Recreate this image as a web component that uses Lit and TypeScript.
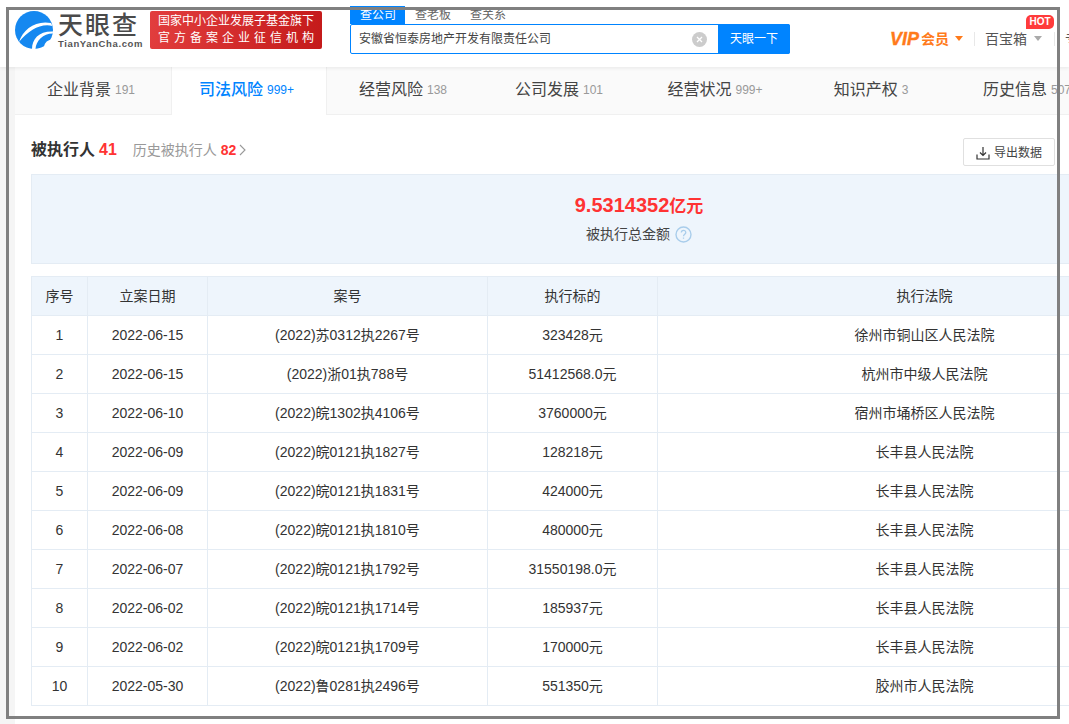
import { LitElement, html, css } from "lit";
import { customElement } from "lit/decorators.js";

const tabs = [
  ["企业背景", "191"], ["司法风险", "999+"], ["经营风险", "138"], ["公司发展", "101"],
  ["经营状况", "999+"], ["知识产权", "3"], ["历史信息", "507"],
];
const rows = [
  ["1", "2022-06-15", "(2022)苏0312执2267号", "323428元", "徐州市铜山区人民法院"],
  ["2", "2022-06-15", "(2022)浙01执788号", "51412568.0元", "杭州市中级人民法院"],
  ["3", "2022-06-10", "(2022)皖1302执4106号", "3760000元", "宿州市埇桥区人民法院"],
  ["4", "2022-06-09", "(2022)皖0121执1827号", "128218元", "长丰县人民法院"],
  ["5", "2022-06-09", "(2022)皖0121执1831号", "424000元", "长丰县人民法院"],
  ["6", "2022-06-08", "(2022)皖0121执1810号", "480000元", "长丰县人民法院"],
  ["7", "2022-06-07", "(2022)皖0121执1792号", "31550198.0元", "长丰县人民法院"],
  ["8", "2022-06-02", "(2022)皖0121执1714号", "185937元", "长丰县人民法院"],
  ["9", "2022-06-02", "(2022)皖0121执1709号", "170000元", "长丰县人民法院"],
  ["10", "2022-05-30", "(2022)鲁0281执2496号", "551350元", "胶州市人民法院"],
];

@customElement("app-root")
export class AppRoot extends LitElement {
  static styles = css`
    :host { display: block; width: 1069px; height: 724px; overflow: hidden; position: relative; background: #f5f5f5;
      font-family: "Liberation Sans", "Noto Sans CJK SC", sans-serif; color: #333; font-size: 14px; line-height: 20px; }
    * { box-sizing: border-box; }
    .frame { position: absolute; left: 6px; top: 7px; width: 1054px; height: 712px; border: 3px solid #808080; pointer-events: none; z-index: 5; }
    .head { height: 67px; background: #fff; display: flex; align-items: flex-start; box-shadow: 0 1px 4px rgba(0,0,0,.08); position: relative; z-index: 2; white-space: nowrap; width: 1069px; }
    .logo { width: 135px; height: 67px; display: flex; padding: 11px 0 0 15px; flex: none; }
    .logo svg { flex: none; width: 38px; height: 38px; }
    .wordmark { margin-left: 5px; width: 82px; display: flex; flex-direction: column; }
    .wm-cn { font-size: 25px; line-height: 27px; letter-spacing: 2px; color: #4a4a4a; font-weight: 500; margin-top: 1px; }
    .wm-en { font-size: 9.5px; line-height: 12px; letter-spacing: .62px; color: #555; font-weight: 700; margin-top: -1px; }
    .banner { margin: 11px 0 0 15px; width: 172px; height: 38px; border-radius: 2px; flex: none;
      background: linear-gradient(100deg, #e23e3e, #c41a1a); color: #fff; text-align: center; font-size: 12px; line-height: 17px; padding-top: 2px; }
    .banner div:last-child { letter-spacing: 4px; padding-left: 4px; }
    .search { margin: 6px 0 0 28px; width: 440px; flex: none; }
    .stabs { display: flex; height: 18px; font-size: 12px; line-height: 18px; color: #666; }
    .stab { padding: 0 10px; width: 55px; text-align: center; }
    .stab.on { background: #0084ff; color: #fff; }
    .sbox { height: 30px; border: 1px solid #0084ff; border-radius: 2px; display: flex; align-items: center; font-size: 12px; background: #fff; }
    .sval { flex: 1; padding-left: 8px; color: #444; }
    .clear { width: 15px; height: 15px; margin-right: 11px; flex: none; display: block; }
    .sbtn { width: 72px; height: 30px; margin: -1px -1px -1px 0; background: #0084ff; color: #fff; text-align: center; line-height: 30px; border-radius: 0 2px 2px 0; }
    .right { display: flex; align-items: center; margin: 26px 0 0 100px; height: 25px; position: relative; font-size: 14px; color: #555; }
    .vip { color: #ff7a1a; font-weight: 700; font-size: 14px; display: flex; align-items: center; width: 84px; }
    .vip i { font-size: 18px; font-style: italic; font-weight: 700; margin-right: 2px; -webkit-text-stroke: .4px #ff7a1a; }
    .tri { width: 0; height: 0; border-left: 4.5px solid transparent; border-right: 4.5px solid transparent; border-top: 5px solid #ff7a1a; margin-left: 6px; }
    .tri.gray { border-top-color: #aaa; margin-left: 7px; }
    .sep { width: 1px; height: 14px; background: #e8e8e8; flex: none; }
    .box { margin-left: 10px; display: flex; align-items: center; width: 69px; }
    .hot { position: absolute; left: 136px; top: -11px; width: 28px; height: 14px; background: #ff3b3b; color: #fff; font-size: 10px; line-height: 14px; text-align: center; border-radius: 5px 5px 5px 0; font-weight: 700; }
    .more { margin-left: 10px; }
    .page { margin-left: 15px; width: 1054px; background: #fff; height: 657px; overflow: hidden; }
    .tabs { display: flex; height: 48px; background: #fafafa; border-bottom: 1px solid #f0f0f0; white-space: nowrap; }
    .tab { flex: none; width: 156px; height: 47px; display: flex; align-items: center; justify-content: center; font-size: 16px; color: #444; padding: 0 4px 2px 0; }
    .tab.on { background: #fff; color: #0084ff; border-left: 1px solid #f0f0f0; border-right: 1px solid #f0f0f0; height: 48px; font-weight: 500; padding: 0 5px 3px 0; }
    .tab span { font-size: 12px; color: #999; margin-left: 4px; font-weight: 400; }
    .tab.on span { color: #0084ff; }
    .tab:last-child { justify-content: flex-start; padding-left: 32px; }
    .body { padding: 22px 0 0 16px; }
    .title { display: flex; align-items: center; height: 28px; white-space: nowrap; }
    .lead { display: flex; align-items: center; margin-bottom: 2px; }
    .lead b { font-size: 16px; color: #333; font-weight: 700; }
    .red { color: #ff3333; font-weight: 700; }
    .num { font-size: 16px; margin-left: 4px; }
    .hist { color: #999; margin-left: 16px; }
    .num2 { font-size: 14px; margin-left: 4px; }
    .chev { margin-left: 3px; width: 7px; height: 12px; display: block; }
    .export { margin: 2px 14px 0 auto; width: 92px; height: 28px; border: 1px solid #e0e0e0; border-radius: 2px; display: flex; align-items: center; justify-content: center; font-size: 12px; color: #444; background: #fff; padding-top: 1px; }
    .export svg { width: 14px; height: 14px; margin-right: 4px; display: block; }
    .summary { margin-top: 9px; width: 1216px; height: 90px; background: #eef5fc; border: 1px solid #e4ecf4; display: flex; flex-direction: column; align-items: center; }
    .amount { margin-top: 17px; height: 26px; line-height: 26px; font-size: 20px; color: #ff3333; font-weight: 700; }
    .amount small { font-size: 17px; font-weight: 700; }
    .label { display: flex; align-items: center; margin-top: 6px; height: 20px; color: #444; }
    .label svg { width: 17px; height: 17px; margin-left: 5px; display: block; }
    table { margin-top: 12px; border-collapse: collapse; table-layout: fixed; width: 1160px; }
    th, td { border: 1px solid #e4ecf4; height: 39px; padding: 0; text-align: center; font-weight: 400; color: #333; white-space: nowrap; }
    th { background: #eef5fc; }
  `;

  render() {
    return html`
      <div class="frame"></div>
      <header class="head">
        <div class="logo">
          <svg viewBox="0 0 38 38">
            <circle cx="19" cy="19" r="19" fill="#1588f0"/>
            <path d="M4 31C8 18 21 9 36 12L37.500 15C26 12 14 19 4 31Z" fill="#fff"/>
            <path d="M17 38C17 28 24 20 38 20.500L37.800 22.500C28 22.500 21 30 20.500 38Z" fill="#fff"/>
            <path d="M29 37C29 33 31 29.500 36.500 28.500L34 33Z" fill="#fff"/>
          </svg>
          <div class="wordmark">
            <div class="wm-cn">天眼查</div>
            <div class="wm-en">TianYanCha.com</div>
          </div>
        </div>
        <div class="banner"><div>国家中小企业发展子基金旗下</div><div>官方备案企业征信机构</div></div>
        <div class="search">
          <div class="stabs"><div class="stab on">查公司</div><div class="stab">查老板</div><div class="stab">查关系</div></div>
          <div class="sbox">
            <div class="sval">安徽省恒泰房地产开发有限责任公司</div>
            <svg class="clear" viewBox="0 0 15 15"><circle cx="7.5" cy="7.5" r="7.5" fill="#ccc"/><path d="M5 5l5 5M10 5l-5 5" stroke="#fff" stroke-width="1.3"/></svg>
            <div class="sbtn">天眼一下</div>
          </div>
        </div>
        <div class="right">
          <div class="vip"><i>VIP</i>会员<span class="tri"></span></div>
          <div class="sep"></div>
          <div class="box">百宝箱<span class="tri gray"></span></div>
          <div class="sep"></div>
          <div class="more">专业版</div>
          <div class="hot">HOT</div>
        </div>
      </header>
      <main class="page">
        <nav class="tabs">
          ${tabs.map(([n, c], i) => html`<div class="tab ${i === 1 ? "on" : ""}">${n}<span>${c}</span></div>`)}
        </nav>
        <section class="body">
          <div class="title">
            <div class="lead">
              <b>被执行人</b><span class="red num">41</span>
              <span class="hist">历史被执行人</span><span class="red num2">82</span>
              <svg class="chev" viewBox="0 0 7 12"><path d="M1 1l5 5-5 5" fill="none" stroke="#999" stroke-width="1.1"/></svg>
            </div>
            <div class="export">
              <svg viewBox="0 0 14 14"><path d="M7 1v8M4 6.5L7 9.5l3-3M1 8.5v4.5h12V8.5" fill="none" stroke="#333" stroke-width="1.2"/></svg>
              导出数据
            </div>
          </div>
          <div class="summary">
            <div class="amount">9.5314352<small>亿元</small></div>
            <div class="label">被执行总金额
              <svg viewBox="0 0 17 17"><circle cx="8.5" cy="8.5" r="7.5" fill="none" stroke="#a9cdeb" stroke-width="1.4"/><path d="M6.3 6.6c0-3 4.5-3 4.5-.1 0 1.800-2.300 1.800-2.300 3.800M8.500 11.500v1.300" fill="none" stroke="#a9cdeb" stroke-width="1.300"/></svg>
            </div>
          </div>
          <table>
            <colgroup><col style="width:56px"/><col style="width:120px"/><col style="width:280px"/><col style="width:170px"/><col style="width:534px"/></colgroup>
            <thead><tr><th>序号</th><th>立案日期</th><th>案号</th><th>执行标的</th><th>执行法院</th></tr></thead>
            <tbody>${rows.map((r) => html`<tr>${r.map((c) => html`<td>${c}</td>`)}</tr>`)}</tbody>
          </table>
        </section>
      </main>
    `;
  }
}
